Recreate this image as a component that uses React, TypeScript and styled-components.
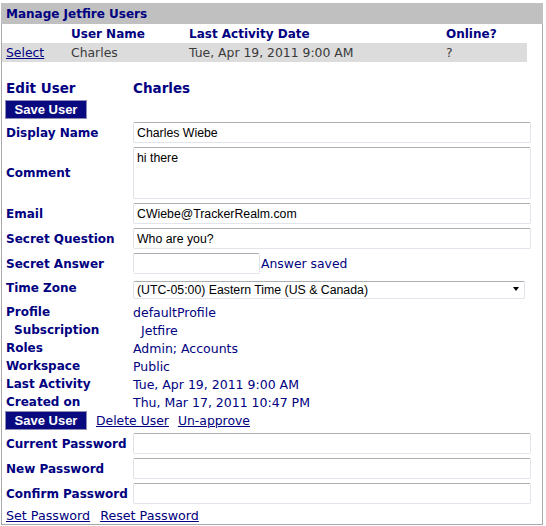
import React from "react";
import styled, { createGlobalStyle } from "styled-components";

const Global = createGlobalStyle`
  html, body { margin: 0; padding: 0; background: #fff; }
  body { font-family: "DejaVu Sans", Verdana, sans-serif; }
`;

const NAVY = "#000080";

const Panel = styled.div`
  margin: 3px 3px 0 1px;
  width: 542px;
  box-sizing: border-box;
  border: 1px solid #a9a9a9;
  border-top: none;
  padding-bottom: 1px;
`;

const TitleBar = styled.div`
  height: 21px;
  background: #c0c0c0;
  margin: 0 -1px;
  padding: 1px 0 0 5px;
  box-sizing: border-box;
  display: flex;
  align-items: center;
  font: bold 12px "DejaVu Sans", Verdana, sans-serif;
  color: ${NAVY};
`;

const UserTable = styled.div`
  width: 525px;
  display: grid;
  grid-template-columns: 65px 118px 257px 85px;
`;

const Cell = styled.div<{ $head?: boolean }>`
  height: 19px;
  display: flex;
  align-items: center;
  padding-left: 4px;
  white-space: nowrap;
  background: ${(p) => (p.$head ? "#fff" : "#dcdcdc")};
  font: ${(p) => (p.$head ? "bold 12px" : "12.4px")} "DejaVu Sans", Verdana, sans-serif;
  color: ${(p) => (p.$head ? NAVY : "#3a3a3a")};
`;

const Link = styled.a`
  color: ${NAVY};
  text-decoration: underline;
  cursor: pointer;
  font: 12.4px "DejaVu Sans", Verdana, sans-serif;
  white-space: nowrap;
`;

const Edit = styled.div`
  padding: 17px 0 0 4px;
`;

const Heading = styled.div`
  display: grid;
  grid-template-columns: 127px 1fr;
  height: 18px;
  align-items: center;
  font: bold 13.5px "DejaVu Sans", Verdana, sans-serif;
  color: ${NAVY};
`;

const Button = styled.button`
  height: 19px;
  width: 82px;
  box-sizing: border-box;
  padding: 0;
  background: #0a0a80;
  border: 1px solid #8c8cb4;
  color: #fff;
  font: bold 13px "Liberation Sans", Arial, sans-serif;
  display: flex;
  align-items: center;
  justify-content: center;
  cursor: pointer;
`;

const TopButtonRow = styled.div`
  margin-top: 3px;
  margin-left: -1px;
`;

const FieldGrid = styled.div<{ $top: number }>`
  margin-top: ${(p) => p.$top}px;
  display: grid;
  grid-template-columns: 127px 398px;
  row-gap: 4px;
`;

const Label = styled.div<{ $indent?: boolean }>`
  display: flex;
  align-items: center;
  padding-left: ${(p) => (p.$indent ? 8 : 0)}px;
  font: bold 12px "DejaVu Sans", Verdana, sans-serif;
  color: ${NAVY};
  white-space: nowrap;
`;

const Control = styled.div`
  display: flex;
  align-items: center;
  min-height: 20px;
`;

const inputBorder = `
  box-sizing: border-box;
  border: 1px solid #e1e4ea;
  border-top-color: #abadb3;
  border-left-color: #dfe2e8;
  border-radius: 2px;
  font: 12.3px "Liberation Sans", Arial, sans-serif;
  color: #000;
  background: #fff;
  outline: none;
`;

const TextInput = styled.input<{ $w?: number }>`
  ${inputBorder}
  width: ${(p) => p.$w ?? 398}px;
  height: 21px;
  padding: 0 3px;
`;

const TextArea = styled.textarea`
  ${inputBorder}
  width: 398px;
  height: 52px;
  padding: 3px 3px;
  resize: none;
  display: block;
`;

const Note = styled.span`
  margin-left: 1px;
  font: 12.4px "DejaVu Sans", Verdana, sans-serif;
  color: ${NAVY};
  white-space: nowrap;
`;

const SelectBox = styled.div`
  position: relative;
  width: 392px;
  height: 18px;
`;

const Select = styled.select`
  ${inputBorder}
  appearance: none;
  -webkit-appearance: none;
  width: 100%;
  height: 18px;
  padding: 0 3px;
  line-height: 16px;
`;

const Arrow = styled.span`
  position: absolute;
  right: 6px;
  top: 8px;
  width: 0;
  height: 0;
  border-left: 3.5px solid transparent;
  border-right: 3.5px solid transparent;
  border-top: 4px solid #000;
  pointer-events: none;
`;

const InfoGrid = styled.div`
  margin-top: 5px;
  display: grid;
  grid-template-columns: 127px 1fr;
`;

const Value = styled.div<{ $indent?: boolean }>`
  height: 18px;
  display: flex;
  align-items: center;
  padding-left: ${(p) => (p.$indent ? 8 : 0)}px;
  font: 12.5px "DejaVu Sans", Verdana, sans-serif;
  color: ${NAVY};
  white-space: nowrap;
`;

const ActionRow = styled.div<{ $top: number; $gap: number }>`
  margin-top: ${(p) => p.$top}px;
  display: flex;
  align-items: center;
  gap: ${(p) => p.$gap}px;
  min-height: 16px;
`;

const ButtonSlot = styled.div`
  margin-left: -1px;
`;

const WideLink = styled(Link)`
  font-size: 12.7px;
`;

const info: [string, string, boolean?][] = [
  ["Profile", "defaultProfile"],
  ["Subscription", "Jetfire", true],
  ["Roles", "Admin; Accounts"],
  ["Workspace", "Public"],
  ["Last Activity", "Tue, Apr 19, 2011 9:00 AM"],
  ["Created on", "Thu, Mar 17, 2011 10:47 PM"],
];

export default function App() {
  return (
    <>
      <Global />
      <Panel>
        <TitleBar>Manage Jetfire Users</TitleBar>
        <UserTable>
          <Cell $head />
          <Cell $head>User Name</Cell>
          <Cell $head>Last Activity Date</Cell>
          <Cell $head>Online?</Cell>
          <Cell>
            <Link>Select</Link>
          </Cell>
          <Cell>Charles</Cell>
          <Cell>Tue, Apr 19, 2011 9:00 AM</Cell>
          <Cell>?</Cell>
        </UserTable>

        <Edit>
          <Heading>
            <span>Edit User</span>
            <span>Charles</span>
          </Heading>
          <TopButtonRow>
            <Button>Save User</Button>
          </TopButtonRow>

          <FieldGrid $top={3}>
            <Label>Display Name</Label>
            <Control>
              <TextInput defaultValue="Charles Wiebe" />
            </Control>
            <Label>Comment</Label>
            <Control>
              <TextArea defaultValue="hi there" />
            </Control>
            <Label>Email</Label>
            <Control>
              <TextInput defaultValue="CWiebe@TrackerRealm.com" />
            </Control>
            <Label>Secret Question</Label>
            <Control>
              <TextInput defaultValue="Who are you?" />
            </Control>
            <Label>Secret Answer</Label>
            <Control>
              <TextInput $w={127} />
              <Note>Answer saved</Note>
            </Control>
            <Label>Time Zone</Label>
            <Control>
              <SelectBox>
                <Select defaultValue="est">
                  <option value="est">(UTC-05:00) Eastern Time (US &amp; Canada)</option>
                </Select>
                <Arrow />
              </SelectBox>
            </Control>
          </FieldGrid>

          <InfoGrid>
            {info.map(([k, v, ind]) => (
              <React.Fragment key={k}>
                <Label $indent={ind}>{k}</Label>
                <Value $indent={ind}>{v}</Value>
              </React.Fragment>
            ))}
          </InfoGrid>

          <ActionRow $top={0} $gap={9}>
            <ButtonSlot>
              <Button>Save User</Button>
            </ButtonSlot>
            <Link>Delete User</Link>
            <Link>Un-approve</Link>
          </ActionRow>

          <FieldGrid $top={3}>
            <Label>Current Password</Label>
            <Control>
              <TextInput type="password" />
            </Control>
            <Label>New Password</Label>
            <Control>
              <TextInput type="password" />
            </Control>
            <Label>Confirm Password</Label>
            <Control>
              <TextInput type="password" />
            </Control>
          </FieldGrid>

          <ActionRow $top={3} $gap={10}>
            <WideLink>Set Password</WideLink>
            <WideLink>Reset Password</WideLink>
          </ActionRow>
        </Edit>
      </Panel>
    </>
  );
}
